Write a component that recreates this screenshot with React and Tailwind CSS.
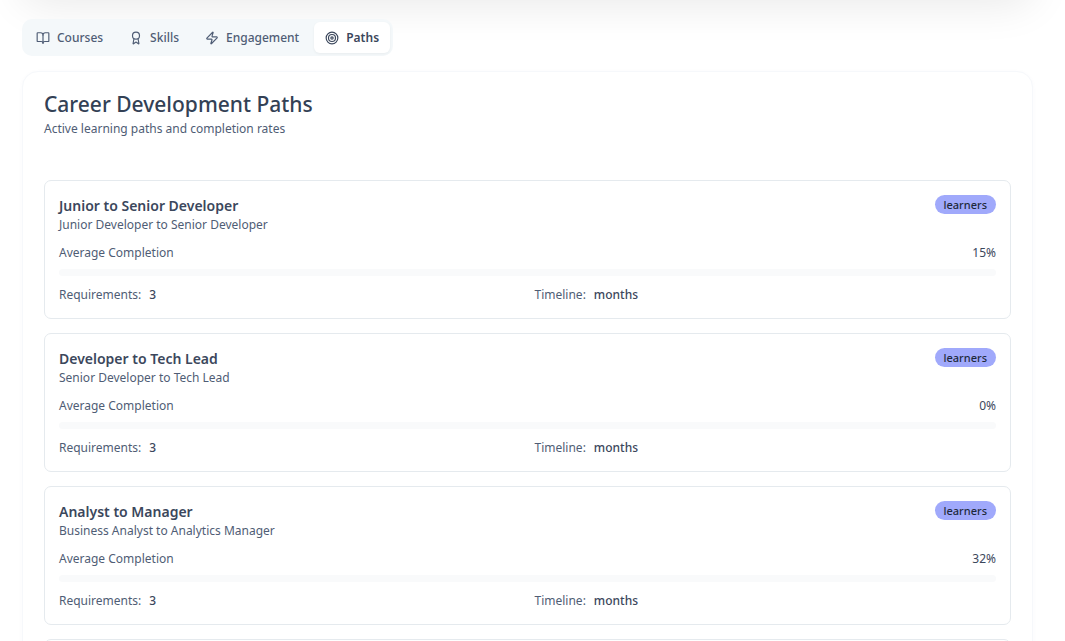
import React from "react";
import { BookOpen, Award, Zap, Target } from "lucide-react";

const tabs = [
  { name: "Courses", icon: BookOpen },
  { name: "Skills", icon: Award },
  { name: "Engagement", icon: Zap },
  { name: "Paths", icon: Target },
];

const paths = [
  { title: "Junior to Senior Developer", route: "Junior Developer to Senior Developer", completion: 15, requirements: 3 },
  { title: "Developer to Tech Lead", route: "Senior Developer to Tech Lead", completion: 0, requirements: 3 },
  { title: "Analyst to Manager", route: "Business Analyst to Analytics Manager", completion: 32, requirements: 3 },
];

function Tab({ name, icon: Icon, active }) {
  return (
    <button
      type="button"
      role="tab"
      aria-selected={active}
      className={
        active
          ? "flex h-[31px] items-center gap-[7px] rounded-md bg-white px-[11px] font-semibold text-[#3b475c] shadow-[0_1px_3px_rgba(0,0,0,0.05)]"
          : "flex h-[31px] items-center gap-[7px] rounded-md px-[11px] font-medium text-[#4f5d75]"
      }
    >
      <Icon size={14} strokeWidth={2} aria-hidden="true" />
      {name}
    </button>
  );
}

function PathCard({ path }) {
  return (
    <li className="rounded-[7px] border border-[#e5eaee] p-[14px]">
      <div className="flex items-start justify-between">
        <div>
          <h3 className="text-[14px] leading-[21px] font-semibold text-[#3b475c]">{path.title}</h3>
          <p className="text-[#4f5d75]">{path.route}</p>
        </div>
        <span className="rounded-full bg-[#a0a9fb] px-[9px] text-[11px] leading-[19px] font-medium text-[#1e293b]">
          learners
        </span>
      </div>
      <div className="mt-[10px] flex justify-between">
        <span className="text-[#4f5d75]">Average Completion</span>
        <span className="text-[#3b475c]">{path.completion}%</span>
      </div>
      <div
        role="progressbar"
        aria-label="Average Completion"
        aria-valuenow={path.completion}
        className="mt-[7px] h-[7px] rounded-full bg-[#f9fafb]"
      />
      <div className="mt-[10px] grid grid-cols-2 gap-[14px]">
        <p className="flex gap-2">
          <span className="text-[#4f5d75]">Requirements:</span>
          <span className="font-medium text-[#3b475c]">{path.requirements}</span>
        </p>
        <p className="flex gap-2">
          <span className="text-[#4f5d75]">Timeline:</span>
          <span className="font-medium text-[#3b475c]">months</span>
        </p>
      </div>
    </li>
  );
}

export default function App() {
  return (
    <div className="h-screen overflow-hidden bg-white pr-8 pl-[22px] font-['Noto_Sans',sans-serif] text-[12px] leading-[18px]">
      <div className="-mt-40 h-40 rounded-2xl shadow-[0_4px_44px_rgba(0,0,0,0.09)]" />
      <main className="pt-[19px]">
        <div role="tablist" className="inline-flex gap-1 rounded-[10px] bg-[#f4f8fa] p-[3px] align-top">
          {tabs.map((tab) => (
            <Tab key={tab.name} name={tab.name} icon={tab.icon} active={tab.name === "Paths"} />
          ))}
        </div>
        <section className="mt-[15px] rounded-2xl border border-[#f6f8fb] bg-white p-[21px] shadow-[0_1px_4px_rgba(80,90,160,0.03)]">
          <h2 className="text-[21px] leading-[22px] font-medium text-[#334155]">Career Development Paths</h2>
          <p className="mt-[5px] text-[#4f5d75]">Active learning paths and completion rates</p>
          <ul className="mt-[42px] flex flex-col gap-[14px]">
            {paths.map((path) => (
              <PathCard key={path.title} path={path} />
            ))}
            <li aria-hidden="true" className="h-36 rounded-[7px] border border-[#e5eaee]" />
          </ul>
        </section>
      </main>
    </div>
  );
}
